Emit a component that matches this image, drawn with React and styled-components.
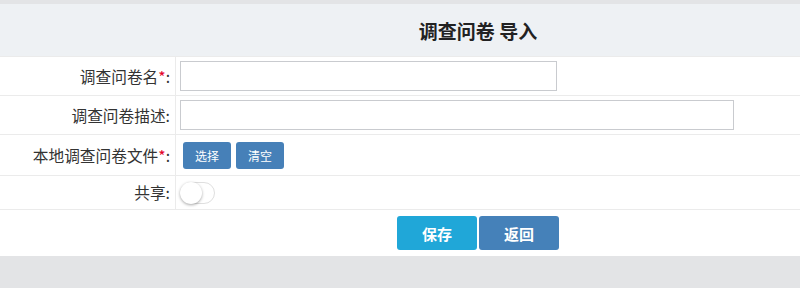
import styled, { createGlobalStyle } from "styled-components";

const GlobalStyle = createGlobalStyle`
  html, body {
    margin: 0;
    padding: 0;
    background: #e3e4e6;
    font-family: "Noto Sans CJK SC", "Noto Sans", sans-serif;
  }
`;

const Page = styled.div`
  padding-top: 4px;
  width: 800px;
  height: 288px;
  box-sizing: border-box;
  background: #e3e4e6;
`;

const Panel = styled.div`
  background: #fff;
`;

const Header = styled.div`
  height: 52px;
  background: #eef1f4;
  display: flex;
  align-items: center;
  justify-content: center;
  padding-left: 156px;
  font-size: 19px;
  font-weight: bold;
  color: #222;
`;

const Row = styled.div`
  display: grid;
  grid-template-columns: 176px 1fr;
  border-top: 1px solid #ebebeb;
  height: ${(p) => p.$h}px;
`;

const Label = styled.div`
  border-right: 1px solid #ebebeb;
  display: flex;
  align-items: center;
  justify-content: flex-end;
  padding-right: 5px;
  font-size: 15.7px;
  color: #333;
`;

const Star = styled.span`
  color: #e4002b;
`;

const Cell = styled.div`
  display: flex;
  align-items: center;
  gap: 5px;
  padding-left: ${(p) => p.$pl || 4}px;
`;

const Input = styled.input`
  width: ${(p) => p.$w}px;
  height: 30px;
  box-sizing: border-box;
  border: 1px solid #c9cbcf;
  outline: none;
  background: #fff;
`;

const SmallButton = styled.button`
  height: 27px;
  width: 48px;
  border: none;
  border-radius: 3px;
  background: #4680b8;
  color: #fff;
  font-family: inherit;
  font-size: 12px;
  padding: 0;
`;

const Toggle = styled.div`
  width: 35px;
  height: 22px;
  box-sizing: border-box;
  border: 1px solid #dfdfdf;
  border-radius: 11px;
  background: #fff;
  position: relative;
`;

const Knob = styled.div`
  position: absolute;
  left: -1px;
  top: -1px;
  width: 22px;
  height: 22px;
  border-radius: 50%;
  background: #fff;
  box-shadow: 0 1px 3px rgba(0, 0, 0, 0.35);
`;

const Footer = styled.div`
  border-top: 1px solid #ebebeb;
  height: 40px;
  display: flex;
  justify-content: center;
  align-items: flex-start;
  padding-top: 6px;
  padding-left: 156px;
  gap: 2px;
`;

const BigButton = styled.button`
  width: 80px;
  height: 34px;
  border: none;
  border-radius: 3px;
  background: ${(p) => p.$bg};
  color: #fff;
  font-family: inherit;
  font-size: 15px;
  font-weight: bold;
  padding: 0;
`;

export default function App() {
  return (
    <Page>
      <GlobalStyle />
      <Panel>
        <Header>调查问卷 导入</Header>
        <Row $h={38}>
          <Label>
            调查问卷名<Star>*</Star>:
          </Label>
          <Cell>
            <Input $w={377} />
          </Cell>
        </Row>
        <Row $h={38}>
          <Label>调查问卷描述:</Label>
          <Cell>
            <Input $w={554} />
          </Cell>
        </Row>
        <Row $h={40}>
          <Label>
            本地调查问卷文件<Star>*</Star>:
          </Label>
          <Cell $pl={7}>
            <SmallButton>选择</SmallButton>
            <SmallButton>清空</SmallButton>
          </Cell>
        </Row>
        <Row $h={33}>
          <Label>共享:</Label>
          <Cell>
            <Toggle>
              <Knob />
            </Toggle>
          </Cell>
        </Row>
        <Footer>
          <BigButton $bg="#20a7d8">保存</BigButton>
          <BigButton $bg="#4581b9">返回</BigButton>
        </Footer>
      </Panel>
    </Page>
  );
}
